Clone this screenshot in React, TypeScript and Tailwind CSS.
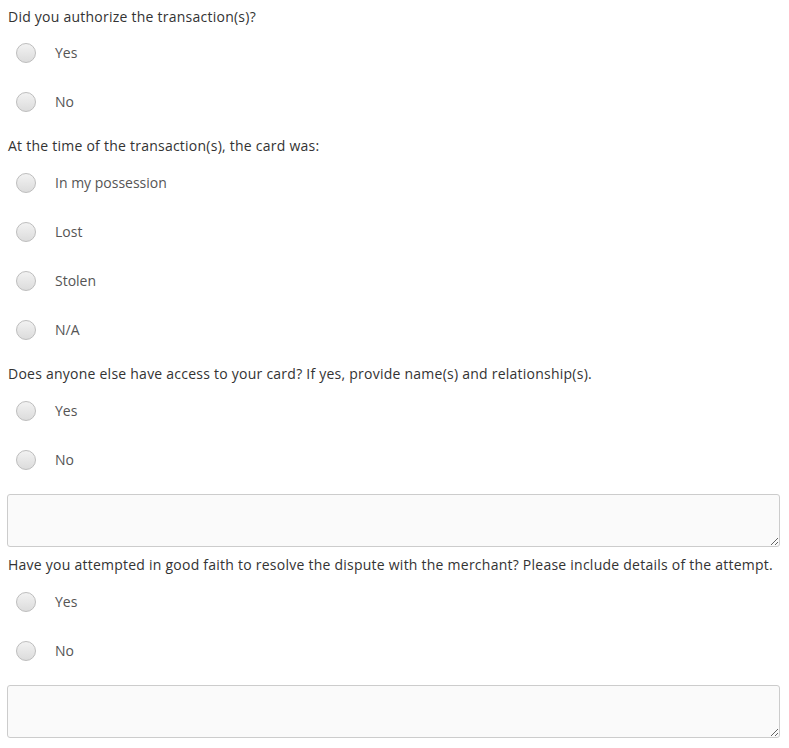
const FONT = "font-['Open_Sans',sans-serif]";

type Question = {
  label: string;
  options: string[];
  withNotes?: boolean;
};

const QUESTIONS: Question[] = [
  { label: 'Did you authorize the transaction(s)?', options: ['Yes', 'No'] },
  {
    label: 'At the time of the transaction(s), the card was:',
    options: ['In my possession', 'Lost', 'Stolen', 'N/A'],
  },
  {
    label:
      'Does anyone else have access to your card? If yes, provide name(s) and relationship(s).',
    options: ['Yes', 'No'],
    withNotes: true,
  },
  {
    label:
      'Have you attempted in good faith to resolve the dispute with the merchant? Please include details of the attempt.',
    options: ['Yes', 'No'],
    withNotes: true,
  },
];

const Radio = ({ label }: { label: string }) => (
  <label className="flex h-[49px] cursor-pointer items-center">
    <span className="ml-[9px] h-[20px] w-[20px] shrink-0 rounded-full border border-[#bdbdbd] bg-gradient-to-b from-[#f2f2f2] to-[#dcdcdc]" />
    <span className="ml-[19px] text-[14px] text-[#555]">{label}</span>
  </label>
);

export default function App() {
  return (
    <div className={`${FONT} w-[789px] bg-white px-[7px] pt-[7px] text-[14px] leading-[20px] text-[#333]`}>
      {QUESTIONS.map((q, i) => (
        <div key={i} className={i === 0 ? '' : i === 3 ? 'mt-[8px]' : 'mt-[10px]'}>
          <div className="pl-[1px] tracking-[0.24px]">{q.label}</div>
          <div className={i === 0 ? 'mt-px' : 'mt-[2px]'}>
            {q.options.map((o) => (
              <Radio key={o} label={o} />
            ))}
          </div>
          {q.withNotes && (
            <textarea className="mt-[10px] block h-[53px] w-[773px] rounded-[3px] border border-[#ccc] bg-[#fafafa] p-2 outline-none" />
          )}
        </div>
      ))}
    </div>
  );
}
